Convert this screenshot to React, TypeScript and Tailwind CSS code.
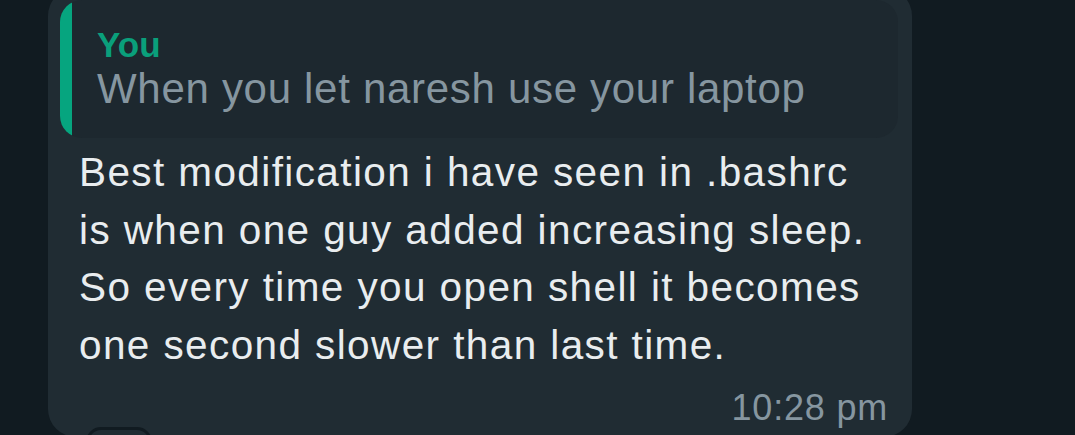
export default function App() {
  return (
    <div className="relative h-[435px] w-[1075px] overflow-hidden bg-[#111b21] font-['Liberation_Sans',Arial,sans-serif]">
      <div className="ml-[48px] mt-[-12px] w-[864px] rounded-[28px] bg-[#202c33] pb-[9px] pl-[12px] pr-[14px] pt-[12px]">
        {/* quoted reply */}
        <div className="flex h-[138px] overflow-hidden rounded-[22px] bg-[#1d282f]">
          <div className="w-[12px] shrink-0 bg-[#06a57f]" />
          <div className="pl-[25px] pt-[25px]">
            <div className="text-[35px] font-bold leading-[40px] text-[#0a9f7b]">You</div>
            <div className="text-[42px] leading-[48px] tracking-[0.7px] text-[#8696a0]">
              When you let naresh use your laptop
            </div>
          </div>
        </div>

        <div className="pl-[19px] pt-[6px] text-[40.5px] leading-[57.5px] tracking-[1.4px] text-[#e9edef]">
          <p>Best modification i have seen in .bashrc</p>
          <p>is when one guy added increasing sleep.</p>
          <p>So every time you open shell it becomes</p>
          <p>one second slower than last time.</p>
        </div>

        <div className="mt-[14px] pr-[10px] text-right text-[36px] leading-[40px] tracking-[0.8px] text-[#8696a0]">10:28 pm</div>
      </div>

      {/* reaction pill peeking below */}
      <div className="absolute left-[86px] top-[427px] h-[30px] w-[66px] rounded-full border-[3px] border-[#111b21] bg-[#202c33]" />
    </div>
  );
}
